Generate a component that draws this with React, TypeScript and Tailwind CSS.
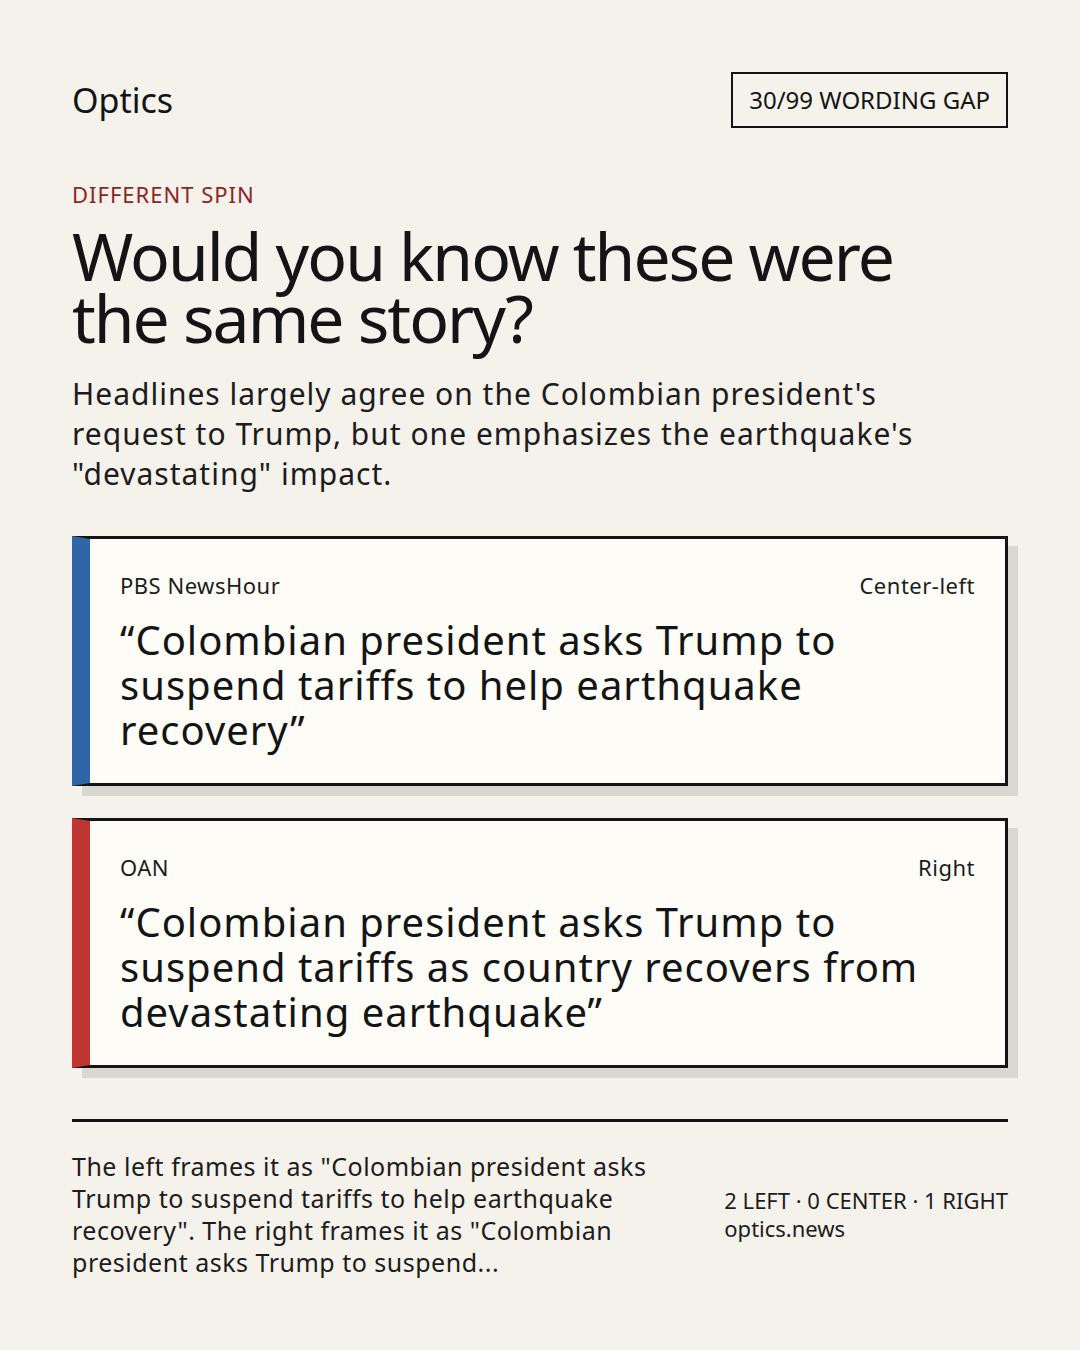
const cards = [
  {
    source: "PBS NewsHour",
    lean: "Center-left",
    bar: "border-l-[#2f66a8]",
    headline: "Colombian president asks Trump to suspend tariffs to help earthquake recovery",
  },
  {
    source: "OAN",
    lean: "Right",
    bar: "border-l-[#c03532]",
    headline: "Colombian president asks Trump to suspend tariffs as country recovers from devastating earthquake",
  },
];

function HeadlineCard({ source, lean, bar, headline }: (typeof cards)[number]) {
  return (
    <div
      className={`border-[3px] border-[#141414] border-l-[18px] ${bar} bg-[#fdfcf7] shadow-[10px_10px_0_#dad7d0] pt-[31px] pb-[31px] pl-[30px] pr-[30px]`}
    >
      <div className="flex items-center justify-between text-[22px] leading-[31px] tracking-[0.5px] text-[#1c1c1c]">
        <span>{source}</span>
        <span>{lean}</span>
      </div>
      <p className="mt-[16px] text-[40px] leading-[45px] tracking-[1px] text-[#141414]">
        “{headline}”
      </p>
    </div>
  );
}

export default function App() {
  return (
    <div
      className="w-[1080px] h-[1350px] bg-[#f5f1eb] px-[72px] pt-[72px] text-[#141414]"
      style={{ fontFamily: '"Noto Sans", "Open Sans", sans-serif' }}
    >
      <header className="flex items-center justify-between">
        <span className="text-[34px] leading-none">Optics</span>
        <span className="border-2 border-[#141414] h-[56px] px-[16px] flex items-center text-[24px]">
          30/99 WORDING GAP
        </span>
      </header>

      <div className="mt-[51px] text-[22px] leading-[30px] tracking-[1px] text-[#8a2525]">
        DIFFERENT SPIN
      </div>

      <h1 className="mt-[15px] max-w-[880px] text-[66px] leading-[62px] tracking-[-2px]">
        Would you know these were the same story?
      </h1>

      <p className="mt-[26px] max-w-[870px] text-[30px] leading-[40px] tracking-[1px] text-[#1c1c1c]">
        Headlines largely agree on the Colombian president's request to Trump, but one emphasizes
        the earthquake's "devastating" impact.
      </p>

      <div className="mt-[42px] flex flex-col gap-[32px]">
        {cards.map((c) => (
          <HeadlineCard key={c.source} {...c} />
        ))}
      </div>

      <div className="mt-[51px] h-[3px] bg-[#141414]" />

      <footer className="mt-[28px] flex items-center justify-between">
        <p className="w-[600px] text-[25px] leading-[32px] tracking-[0.5px] text-[#1c1c1c]">
          The left frames it as "Colombian president asks Trump to suspend tariffs to help earthquake
          recovery". The right frames it as "Colombian president asks Trump to suspend...
        </p>
        <div className="text-[22px] leading-[28px] text-[#1c1c1c]">
          <div>2 LEFT · 0 CENTER · 1 RIGHT</div>
          <div>optics.news</div>
        </div>
      </footer>
    </div>
  );
}
